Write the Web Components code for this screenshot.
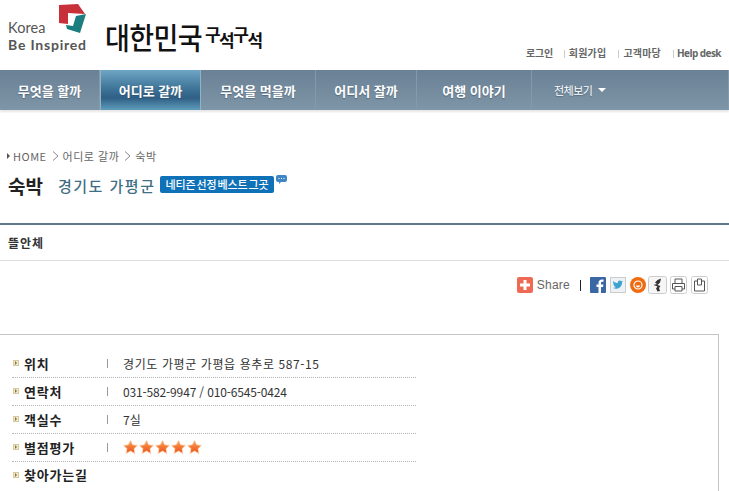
<!DOCTYPE html>
<html lang="ko">
<head>
<meta charset="utf-8">
<title>숙박</title>
<style>
html, body { margin: 0; padding: 0; background: #fff; }
body { width: 729px; height: 491px; overflow: hidden; font-family: "Noto Sans CJK KR", "Noto Sans", sans-serif; }
</style>
</head>
<body>
<site-header></site-header>
<main-nav></main-nav>
<page-title></page-title>
<share-bar></share-bar>
<info-box>
	<info-row label="위치" spacing=".6px">경기도 가평군 가평읍 용추로 587-15</info-row>
	<info-row label="연락처" spacing="-.15px">031-582-9947 / 010-6545-0424</info-row>
	<info-row label="객실수">7실</info-row>
	<info-row label="별점평가"><star-rating count="5"></star-rating></info-row>
	<info-row label="찾아가는길" last></info-row>
</info-box>
<script>
class SiteHeader extends HTMLElement {
	constructor() {
		super();
		this.attachShadow({ mode: 'open' });
	}
	connectedCallback() {
		this.shadowRoot.innerHTML = `
		<style>
		:host { display: flex; height: 70px; box-sizing: border-box; justify-content: space-between; font-family: "Noto Sans CJK KR", sans-serif; }
		.brand { display: flex; align-items: flex-start; padding: 4px 0 0 8px; }
		.logo { display: grid; width: 80px; height: 50px; }
		.logo > * { grid-area: 1 / 1; }
		.logo svg { margin-left: 50px; }
		.text { display: flex; flex-direction: column; padding-top: 15px; color: #555; white-space: nowrap; }
		.korea { font: 14.5px/17px Lato, sans-serif; letter-spacing: .1px; }
		.be { font: bold 14px/17px Lato, sans-serif; letter-spacing: .8px; }
		.name { margin: 14px 0 0 17px; display: flex; align-items: center; color: #111; white-space: nowrap; }
		.name b { font-size: 27px; line-height: 38px; letter-spacing: -.6px; font-weight: 500; transform: scaleY(1.1); }
		.name span { display: flex; font-size: 17px; line-height: 24px; letter-spacing: -1.5px; margin-left: 3px; font-weight: 700; }
		.name span i { font-style: normal; transform: translateY(-3px); }
		.name span i + i { transform: translateY(3px); }
		.name span i:nth-child(3) { transform: translateY(-3px); }
		.links { display: flex; align-self: flex-end; padding: 0 8px 10px 0; font-size: 10px; line-height: 14px; font-weight: 700; color: #666; white-space: nowrap; }
		.links a { padding-left: 5px; margin-left: 12px; position: relative; letter-spacing: .2px; }
		.links a:first-child { margin-left: 0; padding-left: 0; letter-spacing: -.3px; }
		.links a:nth-child(2) { margin-left: 11px; }
		.links a:last-child { font: bold 10px/14px "Open Sans", sans-serif; letter-spacing: -.55px; padding-left: 4px; }
		.links a:not(:first-child)::before { content: ""; position: absolute; left: 0; top: 4px; height: 8px; border-left: 1px solid #ccc; }
		</style>
		<div class="brand">
			<div class="logo">
				<svg width="30" height="30" viewBox="0 0 30 30">
					<path d="M1 1 L20 0 L27 10 L10 9 L10 20 L1 19 Z" fill="#c8303a"/>
					<path d="M18 12 L28 10 L22 29 L9 25 L8 21 L15 22 Z" fill="#1c7d80"/>
				</svg>
				<div class="text"><span class="korea">Korea</span><span class="be">Be Inspired</span></div>
			</div>
			<div class="name"><b>대한민국</b><span><i>구</i><i>석</i><i>구</i><i>석</i></span></div>
		</div>
		<nav class="links"><a>로그인</a><a>회원가입</a><a>고객마당</a><a>Help desk</a></nav>
		`;
	}
}
customElements.define('site-header', SiteHeader);

class MainNav extends HTMLElement {
	constructor() {
		super();
		this.attachShadow({ mode: 'open' });
	}
	connectedCallback() {
		const items = [
			['무엇을 할까', 100],
			['어디로 갈까', 101, true],
			['무엇을 먹을까', 115],
			['어디서 잘까', 101],
			['여행 이야기', 115]
		];
		const cells = items.map(([t, w, on]) => `<a class="${on ? 'on' : ''}" style="width:${w}px">${t}</a>`).join('');
		this.shadowRoot.innerHTML = `
		<style>
		:host { display: flex; height: 40px; box-sizing: border-box; border-right: 1px solid #8499aa; background: linear-gradient(#6a8095, #7e96a8); box-shadow: 0 2px 2px #e6e6e6; color: #fff; font-family: "Noto Sans CJK KR", sans-serif; }
		a { display: flex; align-items: center; justify-content: center; box-sizing: border-box; font-size: 13px; font-weight: 700; white-space: nowrap; border-right: 1px solid #8499aa; text-shadow: 0 1px 1px rgba(50,70,90,.5); }
		a:first-child { border-right: 0; padding-right: 10px; }
		a.on { background: linear-gradient(#6fa6c6 0, #3f7699 45%, #2f5f84 70%, #5f9dbd 100%); border-right: 1px solid #8fb4c8; border-left: 1px solid #8fb4c8; }
		a.more { font-size: 11px; border: 0; padding-left: 22px; gap: 6px; font-weight: 400; letter-spacing: -.5px; }
		i { width: 0; height: 0; border: 4px solid transparent; border-top: 4px solid #fff; border-bottom: 0; }
		</style>
		${cells}<a class="more">전체보기 <i></i></a>
		`;
	}
}
customElements.define('main-nav', MainNav);

class PageTitle extends HTMLElement {
	constructor() {
		super();
		this.attachShadow({ mode: 'open' });
	}
	connectedCallback() {
		const chevron = '<svg class="chev" width="7" height="10" viewBox="0 0 7 10"><path d="M1 .5L6 5 1 9.500" fill="none" stroke="#888"/></svg>';
		this.shadowRoot.innerHTML = `
		<style>
		:host { display: block; padding-top: 38px; font-family: "Noto Sans CJK KR", sans-serif; }
		.crumb { display: flex; align-items: center; height: 16px; padding-left: 7px; font-size: 11px; letter-spacing: .5px; color: #666; white-space: nowrap; }
		.crumb i { width: 0; height: 0; border: 3px solid transparent; border-left: 3px solid #555; border-right: 0; margin-right: 3px; }
		.chev { margin: 0 4px 0 5px; }
		.title { display: flex; align-items: center; height: 36px; margin-top: 3px; padding-left: 8px; white-space: nowrap; }
		h1 { margin: 0; font-size: 19px; font-weight: 700; color: #222; }
		h2 { margin: 0 0 0 15px; font-size: 15px; font-weight: 500; color: #3f6f85; letter-spacing: 1.5px; }
		.badge { margin: -1px 0 0 5px; height: 17px; padding: 0 5px; background: #0f72b8; color: #fff; font-size: 11px; line-height: 17px; border-radius: 2px; font-weight: 500; letter-spacing: -.1px; word-spacing: -2px; }
		.bubble { margin: -11px 0 0 2px; }
		.sub { margin-top: 20px; border-top: 2px solid #62788a; border-bottom: 1px solid #ddd; height: 35px; padding-left: 8px; font-size: 12px; letter-spacing: 1px; font-weight: 700; line-height: 35px; color: #333; }
		</style>
		<div class="crumb"><i></i>HOME${chevron}어디로 갈까${chevron}숙박</div>
		<div class="title">
			<h1>숙박</h1><h2>경기도 가평군</h2><span class="badge">네티즌 선정 베스트 그곳</span>
			<svg class="bubble" width="11" height="9" viewBox="0 0 11 9"><path d="M2 0h7a2 2 0 0 1 2 2v3a2 2 0 0 1-2 2H5L3 9V7H2a2 2 0 0 1-2-2V2a2 2 0 0 1 2-2z" fill="#3f86c4"/><path d="M2.500 3h1v1h-1zm2.500 0h1v1h-1zm2.500 0h1v1h-1z" fill="#fff"/></svg>
		</div>
		<div class="sub">뜰안체</div>
		`;
	}
}
customElements.define('page-title', PageTitle);

class ShareBar extends HTMLElement {
	constructor() {
		super();
		this.attachShadow({ mode: 'open' });
	}
	connectedCallback() {
		this.shadowRoot.innerHTML = `
		<style>
		:host { display: flex; align-items: center; justify-content: flex-end; height: 48px; padding-right: 21px; box-sizing: border-box; font-family: "Liberation Sans", sans-serif; font-size: 12px; letter-spacing: .25px; color: #666; }
		.plus { width: 16px; height: 16px; border-radius: 2px; background: #ee6a55; margin-right: 4px; }
		.sep { width: 1px; height: 11px; background: #222; margin: 0 9px 0 10px; }
		.row { display: flex; align-items: center; }
		svg { display: block; }
		.row svg { margin-left: 4px; }
		.row svg:first-child { margin-left: 0; }
		.row svg.map { margin-left: 2px; }
		.row svg.print { margin-left: 3px; }
		</style>
		<svg class="plus" viewBox="0 0 16 16"><path d="M6.500 3h3v3.500H13v3H9.500V13h-3V9.500H3v-3h3.500z" fill="#fff"/></svg>
		<span>Share</span><span class="sep"></span>
		<div class="row">
			<svg width="16" height="16" viewBox="0 0 16 16"><rect width="16" height="16" rx="1" fill="#3b67a5"/><path d="M11 16V10h2l.4-2.500H11V6c0-.8.3-1.300 1.300-1.300h1.200V2.500H12C9.800 2.500 8.500 3.800 8.500 5.800v1.700H6.500V10h2v6z" fill="#fff"/></svg>
			<svg width="16" height="16" viewBox="0 0 16 16"><rect x=".5" y=".5" width="15" height="15" fill="#eef2f4" stroke="#ccc"/><path d="M13 4.600c-.4.200-.8.300-1.200.3.400-.3.800-.7.900-1.200-.4.200-.9.400-1.300.5a2.100 2.100 0 0 0-3.600 1.900C6 6 4.400 5.200 3.400 3.900c-.6 1-.3 2.200.6 2.800-.3 0-.6-.1-.9-.3 0 1 .7 1.900 1.700 2.100-.3.100-.6.100-.9 0 .3.800 1 1.400 1.900 1.500-.9.700-2 1-3 .8 3.900 2.300 9.300.2 9.300-5.600.4-.3.700-.6.900-1z" fill="#3ea3d3"/></svg>
			<svg width="16" height="16" viewBox="0 0 16 16"><circle cx="8" cy="8" r="8" fill="#ef6b10"/><circle cx="8" cy="8" r="4" fill="none" stroke="#fff" stroke-width="1.200"/><path d="M6 8.500a2 2 0 0 0 4 0z" fill="#fff"/></svg>
			<svg class="map" width="19" height="18" viewBox="0 0 19 18"><rect x=".5" y=".5" width="18" height="17" rx="2" fill="#f6f6f6" stroke="#ccc"/><path d="M13 2.500L9.500 4 7 6.500l2 1.500-3.500 1 4 1.500-1.500 2 1.500 3 2.500-.5-1-3 1.500-2-3-1 2.500-2.500z" fill="#333"/></svg>
			<svg class="print" width="17" height="18" viewBox="0 0 17 18"><rect x=".5" y=".5" width="16" height="17" rx="2" fill="#fff" stroke="#ccc"/><path d="M5 7V3h7v4M5 13H2.500V7.500h12V13H12M5 10.500h7V15H5z" fill="none" stroke="#555"/></svg>
			<svg width="17" height="18" viewBox="0 0 17 18"><rect x=".5" y=".5" width="16" height="17" rx="2" fill="#fff" stroke="#ccc"/><path d="M3.500 5h3V3h4v2h3v10h-10zM6.500 5v4h4V5" fill="none" stroke="#555"/></svg>
		</div>
		`;
	}
}
customElements.define('share-bar', ShareBar);

class InfoBox extends HTMLElement {
	constructor() {
		super();
		this.attachShadow({ mode: 'open' });
	}
	connectedCallback() {
		this.shadowRoot.innerHTML = `
		<style>
		:host { display: block; box-sizing: border-box; width: 719px; margin-top: 25px; height: 157px; padding: 15px 0 0 12px; border-top: 1px solid #c4c4c4; border-right: 1px solid #c4c4c4; }
		.rows { width: 404px; }
		</style>
		<div class="rows"><slot></slot></div>
		`;
	}
}
customElements.define('info-box', InfoBox);

class InfoRow extends HTMLElement {
	constructor() {
		super();
		this.attachShadow({ mode: 'open' });
	}
	connectedCallback() {
		const spacing = this.getAttribute('spacing') || '0';
		this.shadowRoot.innerHTML = `
		<style>
		:host { display: flex; align-items: center; height: 28px; padding-bottom: 1px; box-sizing: border-box; border-bottom: 1px dotted #b5b5b5; font-family: "Noto Sans CJK KR", sans-serif; white-space: nowrap; }
		:host([last]) { border-bottom: 0; height: 26px; }
		.mark { width: 6px; height: 6px; box-sizing: border-box; background: #f0e8cc; border: 1px solid #d8caa0; margin: 0 5px 0 1px; position: relative; }
		.mark::after { content: ""; position: absolute; left: 1px; top: 0; border: 2px solid transparent; border-left: 2px solid #8a7430; border-right: 0; }
		.label { width: 83px; font-size: 13px; font-weight: 700; color: #222; letter-spacing: .8px; }
		.bar { width: 1px; height: 9px; background: #999; margin-right: 15px; }
		.val { font-size: 12px; color: #333; letter-spacing: ${spacing}; }
		</style>
		<span class="mark"></span><span class="label">${this.getAttribute('label')}</span>
		${this.hasAttribute('last') ? '' : '<span class="bar"></span>'}
		<span class="val"><slot></slot></span>
		`;
	}
}
customElements.define('info-row', InfoRow);

class StarRating extends HTMLElement {
	constructor() {
		super();
		this.attachShadow({ mode: 'open' });
	}
	connectedCallback() {
		const n = parseInt(this.getAttribute('count'));
		let stars = '';
		for (let i = 0; i < n; i++) {
			stars += `<svg width="15" height="14" viewBox="0 0 15 14"><defs><linearGradient id="g${i}" x1="0" y1="0" x2="0" y2="1"><stop offset="0" stop-color="#f9a25a"/><stop offset="1" stop-color="#ee4f14"/></linearGradient></defs><path d="M7.500 .5l2.200 4.300 4.800.6-3.500 3.300.9 4.800-4.400-2.400-4.400 2.400.9-4.800L.5 5.400l4.800-.6z" fill="url(#g${i})" stroke="#fbd3ad" stroke-width=".8"/></svg>`;
		}
		this.shadowRoot.innerHTML = `
		<style>
		:host { display: flex; gap: 1px; }
		svg { display: block; }
		</style>
		${stars}
		`;
	}
}
customElements.define('star-rating', StarRating);
</script>
</body>
</html>
